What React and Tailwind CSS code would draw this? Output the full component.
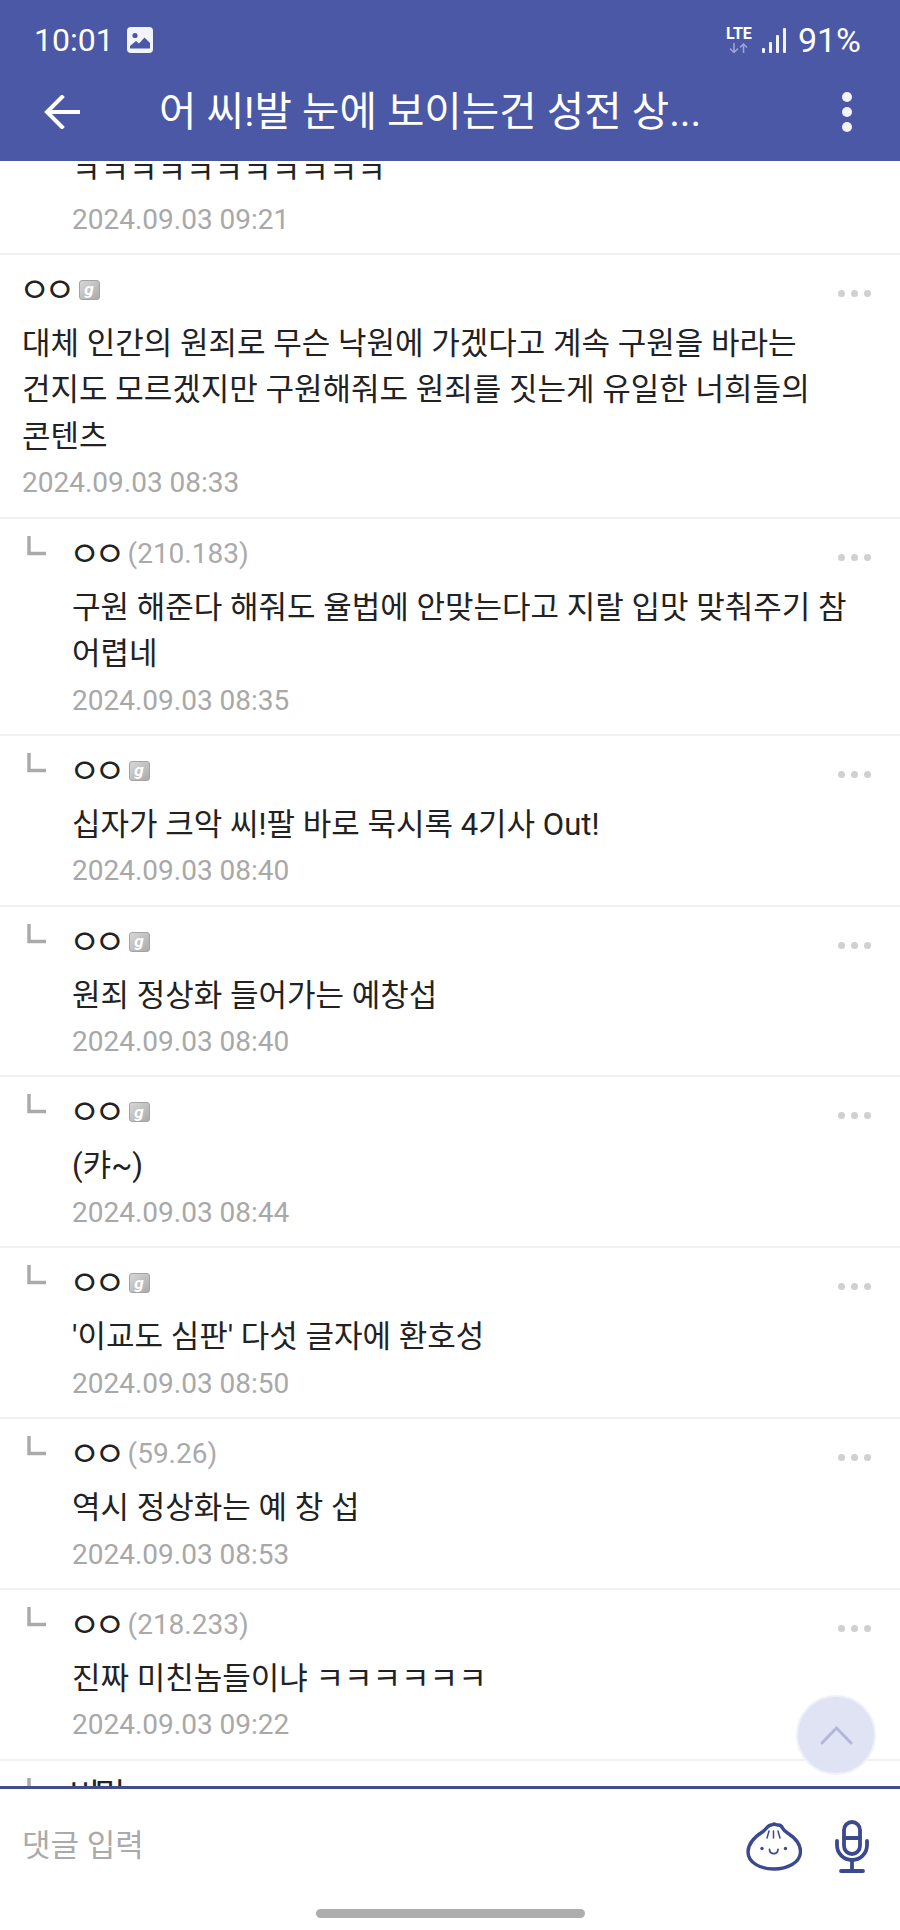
import React from 'react';

const comments = [
  { reply: true, name: '', body: ['ㅋㅋㅋㅋㅋㅋㅋㅋㅋㅋㅋ'], date: '2024.09.03 09:21', hideMore: true },
  { badge: true, body: ['대체 인간의 원죄로 무슨 낙원에 가겠다고 계속 구원을 바라는', '건지도 모르겠지만 구원해줘도 원죄를 짓는게 유일한 너희들의', '콘텐츠'], date: '2024.09.03 08:33' },
  { reply: true, ip: '(210.183)', body: ['구원 해준다 해줘도 율법에 안맞는다고 지랄 입맛 맞춰주기 참', '어렵네'], date: '2024.09.03 08:35' },
  { reply: true, badge: true, body: ['십자가 크악 씨!팔 바로 묵시록 4기사 Out!'], date: '2024.09.03 08:40' },
  { reply: true, badge: true, body: ['원죄 정상화 들어가는 예창섭'], date: '2024.09.03 08:40' },
  { reply: true, badge: true, body: ['(캬~)'], date: '2024.09.03 08:44' },
  { reply: true, badge: true, body: ["'이교도 심판' 다섯 글자에 환호성"], date: '2024.09.03 08:50' },
  { reply: true, ip: '(59.26)', body: ['역시 정상화는 예 창 섭'], date: '2024.09.03 08:53' },
  { reply: true, ip: '(218.233)', body: ['진짜 미친놈들이냐 ㅋㅋㅋㅋㅋㅋ'], date: '2024.09.03 09:22' },
  { reply: true, name: '비밀', body: [], date: '' },
];

const Badge = () => (
  <span className="ml-[9px] flex h-[20px] w-[21px] items-center justify-center rounded-[3px] border border-[#a3a3a3] bg-linear-to-br from-[#d8d8d8] to-[#ababab] text-[17px] leading-none font-bold text-white italic">
    g
  </span>
);

const MoreDots = () => (
  <div className="mt-[7px] ml-auto flex gap-[6px] pr-[29px]">
    <span className="size-[7px] rounded-full bg-[#d0d0d0]" />
    <span className="size-[7px] rounded-full bg-[#d0d0d0]" />
    <span className="size-[7px] rounded-full bg-[#d0d0d0]" />
  </div>
);

const ReplyMark = () => (
  <svg className="absolute top-[17px] left-[27px]" width="20" height="20" viewBox="0 0 20 20" fill="none">
    <path d="M2 0V17.5H19" stroke="#aaaaaa" strokeWidth="3.5" />
  </svg>
);

const Comment = ({ reply, name = 'ㅇㅇ', ip, badge, body, date, hideMore }) => (
  <div className={`relative shrink-0 border-b-2 border-[#f1f1f1] pt-[16px] pb-[10.3px] ${reply ? 'pl-[72px]' : 'pl-[22px]'}`}>
    {reply && <ReplyMark />}
    <div className="flex h-[38px] items-center">
      <span className="ml-[-3px] text-[34px] leading-[38px] tracking-[-6px] text-[#222222]">{name}</span>
      {ip && <span className="ml-[8px] text-[28px] leading-[38px] text-[#aaaaaa]">{ip}</span>}
      {badge && <Badge />}
      {!hideMore && <MoreDots />}
    </div>
    <div className="mt-[12px] text-[31px] leading-[46.5px] whitespace-nowrap text-[#222222]">
      {body.map((line) => (
        <div key={line}>{line}</div>
      ))}
    </div>
    <div className="h-[46px] text-[28px] leading-[46px] text-[#a8a8a8]">{date}</div>
  </div>
);

const BunIcon = () => (
  <svg width="56" height="49" viewBox="0 0 56 49" fill="none" stroke="#3b4a8f">
    <path d="M2 30C2 21 10 14 17 9.5C20 7.5 22 3 25 3C26.5 3 27 2 28 2C29.5 2 30 3 31.5 3C33.5 3 35 2.5 36.5 6C38 9 40 10 43 12C49 16 54.5 22 54.5 29.5C54.5 41 41 47 28 47C15 47 2 41 2 30Z" strokeWidth="3.4" />
    <path d="M23 9L21 16M27.5 9V16M32 9L34 16" strokeWidth="1.5" strokeLinecap="round" />
    <circle cx="16" cy="26.5" r="1.7" fill="#3b4a8f" stroke="none" />
    <circle cx="39.5" cy="26.5" r="1.7" fill="#3b4a8f" stroke="none" />
    <path d="M23.5 27.5C24 33 31.5 33 32 27.5" strokeWidth="1.8" strokeLinecap="round" />
  </svg>
);

const MicIcon = () => (
  <svg width="34" height="53" viewBox="0 0 34 53" fill="none" stroke="#3b4a8f" strokeWidth="3.8" strokeLinecap="round">
    <rect x="9" y="2" width="16" height="32" rx="8" />
    <path d="M9 18H25" />
    <path d="M2 21V25C2 33.5 8.5 40 17 40C25.5 40 32 33.5 32 25V21" />
    <path d="M17 40V50M6 51H28" />
  </svg>
);

export default function App() {
  return (
    <div className="relative flex h-[1930px] w-[900px] flex-col overflow-hidden bg-white font-['Roboto','Noto_Sans_CJK_KR',sans-serif]">
      <header className="z-10 h-[161px] shrink-0 bg-[#4b58a6] text-white">
        <div className="flex h-[80px] items-center pr-[39px] pl-[34px]">
          <span className="text-[32px] leading-none">10:01</span>
          <svg className="ml-[13px]" width="26" height="26" viewBox="0 0 26 26">
            <rect width="26" height="26" rx="4" fill="#f3f4fa" />
            <circle cx="8" cy="8.5" r="2.6" fill="#4b58a6" />
            <path d="M3 21.5V19L9 14L12 16.5L17.5 10.5L23 16V21.5Z" fill="#4b58a6" />
          </svg>
          <div className="ml-auto flex flex-col items-center">
            <span className="text-[16px] leading-[13px] font-bold">LTE</span>
            <svg className="mt-[3px]" width="20" height="10" viewBox="0 0 20 10" fill="none" stroke="#9aa2d3" strokeWidth="1.6">
              <path d="M5 0V9M1 5.5L5 9.5L9 5.5M14.5 10V1M11 4.5L14.5 1L18 4.5" />
            </svg>
          </div>
          <svg className="ml-[10px]" width="24" height="25" viewBox="0 0 24 25" fill="#f3f4fa">
            <rect x="0" y="20" width="3" height="5" rx="1" />
            <rect x="7" y="14" width="3" height="11" rx="1" />
            <rect x="14" y="7" width="3" height="18" rx="1" />
            <rect x="21" y="0" width="3" height="25" rx="1" />
          </svg>
          <span className="ml-[12px] text-[34px] leading-none">91%</span>
        </div>
        <div className="flex h-[64px] items-center pr-[48px] pl-[44px]">
          <svg width="36" height="34" viewBox="0 0 36 34" fill="none" stroke="white" strokeWidth="4" strokeLinecap="square">
            <path d="M18 2L3 17L18 32M4 17H34" />
          </svg>
          <span className="ml-[79px] text-[40.7px] leading-none whitespace-nowrap">어 씨!발 눈에 보이는건 성전 상...</span>
          <div className="ml-auto flex flex-col gap-[5px]">
            <span className="size-[10px] rounded-full bg-[#f3f4fa]" />
            <span className="size-[10px] rounded-full bg-[#f3f4fa]" />
            <span className="size-[10px] rounded-full bg-[#f3f4fa]" />
          </div>
        </div>
      </header>

      <main className="flex min-h-0 flex-1 flex-col overflow-hidden">
        <div className="mt-[-77px]">
          {comments.map((c, i) => (
            <Comment key={i} {...c} />
          ))}
        </div>
      </main>

      <footer className="z-10 shrink-0 border-t-[3px] border-[#414c91] bg-white">
        <div className="flex h-[115px] items-center pr-[31px] pl-[22px]">
          <span className="text-[31px] text-[#aaaaaa]">댓글 입력</span>
          <div className="ml-auto flex items-center gap-[33px]">
            <BunIcon />
            <MicIcon />
          </div>
        </div>
        <div className="mx-auto mt-[5px] mb-[12px] h-[9px] w-[269px] rounded-full bg-[#adadad]" />
      </footer>

      <button className="absolute top-[1695px] left-[796px] z-20 flex size-[80px] items-center justify-center rounded-full border-2 border-[#eef0fa] bg-[#dde0f3]/90">
        <svg width="33" height="19" viewBox="0 0 33 19" fill="none" stroke="#b3b8da" strokeWidth="3" strokeLinecap="round">
          <path d="M2 17L16.5 2L31 17" />
        </svg>
      </button>
    </div>
  );
}
